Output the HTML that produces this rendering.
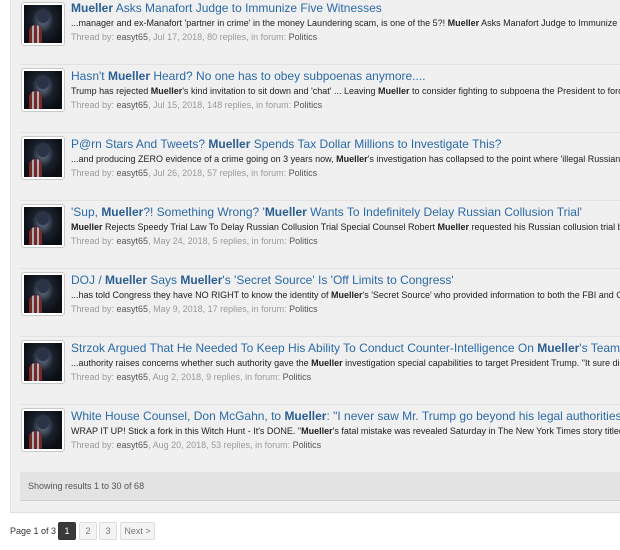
<!DOCTYPE html>
<html><head><style>
body{margin:0;width:620px;height:550px;background:#fff;font-family:"Liberation Sans",sans-serif;overflow:hidden;position:relative}
.box{position:absolute;left:10px;top:-5px;width:620px;height:517px;background:#f0f0f0;border-left:1px solid #e4e4e4;border-bottom:1px solid #e0e0e0}
.it{position:absolute;left:20px;width:600px;height:68px;white-space:nowrap;overflow:hidden}
.sep{border-top:1px solid #e2e2e2}
.av{position:absolute;left:1px;top:2px;width:38px;height:38px;border:1px solid #c8c8c8;padding:2px;background:#fff;border-radius:3px}
.av div{width:38px;height:38px;background:radial-gradient(ellipse at 50% 40%,#4d586a 0 15%,#1a202b 40%,#0b0e14 75%);position:relative;overflow:hidden}
.av div:before{content:"";position:absolute;left:13px;top:6px;width:12px;height:12px;border-radius:50%;background:#2a3446}
.av div:after{content:"";position:absolute;left:5px;top:20px;width:13px;height:18px;background:repeating-linear-gradient(90deg,#8a2a2a 0 3px,#c9c9c9 3px 5px);border-radius:7px 7px 0 0;opacity:.85}
.t{position:absolute;left:51px;top:0;font-size:12px;color:#2b6aa8;line-height:16px}
.t b{color:#2a5e94}
.s{position:absolute;left:51px;top:17px;font-size:9px;color:#222;line-height:12px}
.m{position:absolute;left:51px;top:31px;font-size:9px;color:#9a9a9a;line-height:12px}
.m span{color:#555}
.foot{position:absolute;left:20px;top:472px;width:600px;height:28px;background:#e3e3e3;border-bottom:1px solid #cfcfcf;font-size:9px;color:#555;line-height:28px;text-indent:8px}
.pg{position:absolute;top:522px;left:10px;font-size:9px;color:#333;line-height:18px}
.pb{position:absolute;top:522px;height:16px;line-height:16px;border:1px solid #ddd;border-radius:2px;font-size:9px;color:#777;text-align:center;background:#f4f4f4}
</style></head><body>
<div class="box"></div>
<div class="it" style="top:0"><div class="av"><div></div></div><div class="t"><b>Mueller</b> Asks Manafort Judge to Immunize Five Witnesses</div><div class="s">...manager and ex-Manafort 'partner in crime' in the money Laundering scam, is one of the 5?! <b>Mueller</b> Asks Manafort Judge to Immunize Five Witnesses</div><div class="m">Thread by: <span>easyt65</span>, Jul 17, 2018, 80 replies, in forum: <span>Politics</span></div></div>
<div class="it sep" style="top:64px"><div class="av" style="top:3px"><div></div></div><div class="t" style="top:3px">Hasn't <b>Mueller</b> Heard? No one has to obey subpoenas anymore....</div><div class="s" style="top:20px">Trump has rejected <b>Mueller</b>'s kind invitation to sit down and 'chat' ... Leaving <b>Mueller</b> to consider fighting to subpoena the President to force him</div><div class="m" style="top:34px">Thread by: <span>easyt65</span>, Jul 15, 2018, 148 replies, in forum: <span>Politics</span></div></div>
<div class="it sep" style="top:132px"><div class="av" style="top:3px"><div></div></div><div class="t" style="top:3px">P@rn Stars And Tweets? <b>Mueller</b> Spends Tax Dollar Millions to Investigate This?</div><div class="s" style="top:20px">...and producing ZERO evidence of a crime going on 3 years now, <b>Mueller</b>'s investigation has collapsed to the point where 'illegal Russian...</div><div class="m" style="top:34px">Thread by: <span>easyt65</span>, Jul 26, 2018, 57 replies, in forum: <span>Politics</span></div></div>
<div class="it sep" style="top:200px"><div class="av" style="top:3px"><div></div></div><div class="t" style="top:3px">'Sup, <b>Mueller</b>?! Something Wrong? '<b>Mueller</b> Wants To Indefinitely Delay Russian Collusion Trial'</div><div class="s" style="top:20px"><b>Mueller</b> Rejects Speedy Trial Law To Delay Russian Collusion Trial Special Counsel Robert <b>Mueller</b> requested his Russian collusion trial be delayed</div><div class="m" style="top:34px">Thread by: <span>easyt65</span>, May 24, 2018, 5 replies, in forum: <span>Politics</span></div></div>
<div class="it sep" style="top:268px"><div class="av" style="top:3px"><div></div></div><div class="t" style="top:3px">DOJ / <b>Mueller</b> Says <b>Mueller</b>'s 'Secret Source' Is 'Off Limits to Congress'</div><div class="s" style="top:20px">...has told Congress they have NO RIGHT to know the identity of <b>Mueller</b>'s 'Secret Source' who provided information to both the FBI and CIA</div><div class="m" style="top:34px">Thread by: <span>easyt65</span>, May 9, 2018, 17 replies, in forum: <span>Politics</span></div></div>
<div class="it sep" style="top:336px"><div class="av" style="top:3px"><div></div></div><div class="t" style="top:3px">Strzok Argued That He Needed To Keep His Ability To Conduct Counter-Intelligence On <b>Mueller</b>'s Team</div><div class="s" style="top:20px">...authority raises concerns whether such authority gave the <b>Mueller</b> investigation special capabilities to target President Trump. "It sure did</div><div class="m" style="top:34px">Thread by: <span>easyt65</span>, Aug 2, 2018, 9 replies, in forum: <span>Politics</span></div></div>
<div class="it sep" style="top:404px"><div class="av" style="top:3px"><div></div></div><div class="t" style="top:3px">White House Counsel, Don McGahn, to <b>Mueller</b>: "I never saw Mr. Trump go beyond his legal authorities"</div><div class="s" style="top:20px">WRAP IT UP! Stick a fork in this Witch Hunt - It's DONE. "<b>Mueller</b>'s fatal mistake was revealed Saturday in The New York Times story titled,..</div><div class="m" style="top:34px">Thread by: <span>easyt65</span>, Aug 20, 2018, 53 replies, in forum: <span>Politics</span></div></div>
<div class="foot">Showing results 1 to 30 of 68</div>
<div class="pg">Page 1 of 3</div>
<div class="pb" style="left:58px;width:16px;background:#3a3a3a;color:#fff;border-color:#333">1</div>
<div class="pb" style="left:79px;width:16px">2</div>
<div class="pb" style="left:99px;width:16px">3</div>
<div class="pb" style="left:120px;width:33px">Next &gt;</div>
</body></html>
